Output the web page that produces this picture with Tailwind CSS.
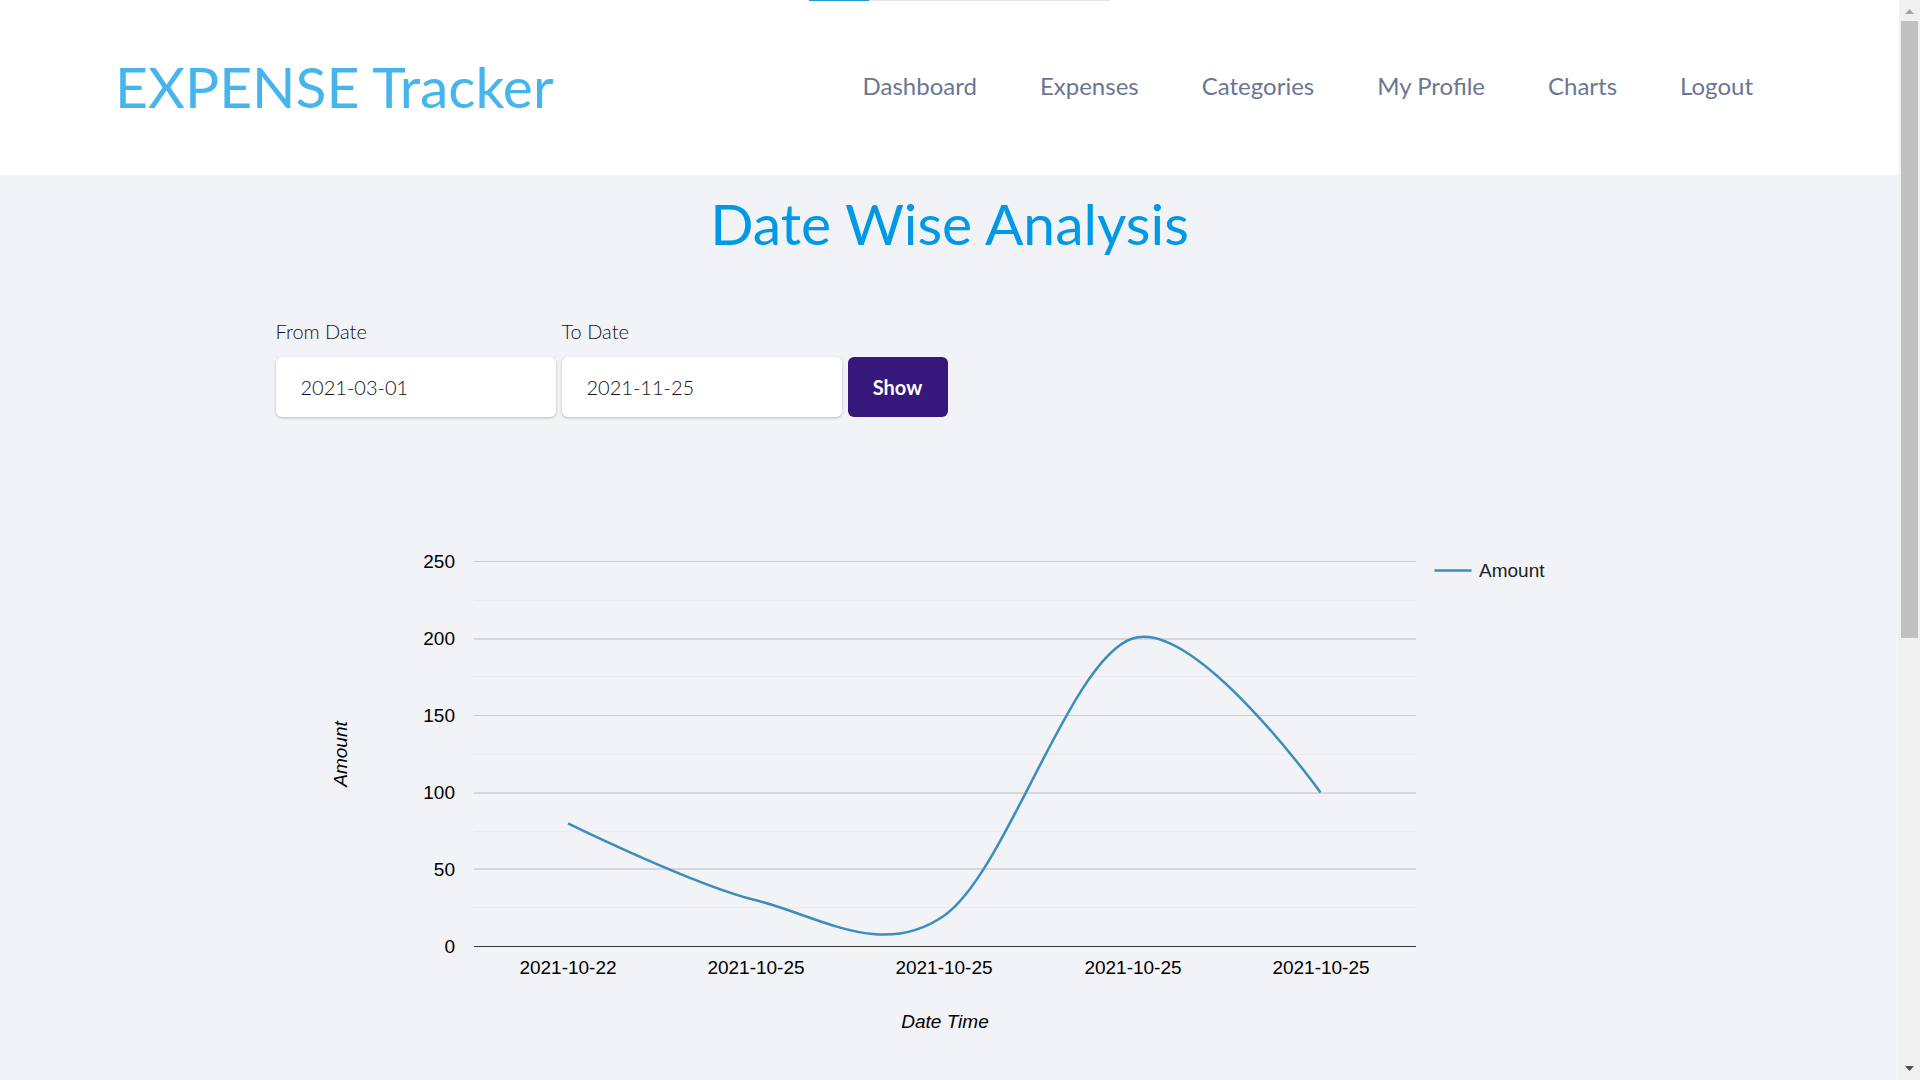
<!DOCTYPE html>
<html lang="en">
<head>
<meta charset="utf-8">
<meta name="viewport" content="width=device-width, initial-scale=1">
<title>EXPENSE Tracker</title>
<script src="https://cdn.jsdelivr.net/npm/@tailwindcss/browser@4"></script>
</head>
<body class="flex h-screen overflow-hidden bg-[#f1f3f7] font-['Lato',sans-serif] text-[#111111]">
  <div class="relative h-full min-w-0 flex-1 overflow-hidden">
    <!-- page loading bar -->
    <div class="absolute top-0 left-[809px] flex h-px w-[301px] bg-[#e5e5e5]"><div class="w-[60px] bg-[#2196d3]"></div></div>

    <header class="flex h-[175px] items-center justify-between bg-white pr-[146px] pb-1 pl-[115px]">
      <a href="#" class="text-[57px] leading-[60px] text-[#47b5ed]">EXPENSE Tracker</a>
      <nav class="flex gap-[63px] text-2xl text-[#6b7694]">
        <a href="#">Dashboard</a>
        <a href="#">Expenses</a>
        <a href="#">Categories</a>
        <a href="#">My Profile</a>
        <a href="#">Charts</a>
        <a href="#">Logout</a>
      </nav>
    </header>

    <main class="mx-auto max-w-[1348px]">
      <h1 class="pt-[18px] text-center text-[57px] leading-[60px] text-[#0099e6]">Date Wise Analysis</h1>

      <form class="flex items-end gap-[6px] pt-[66px]">
        <div class="flex w-[280px] flex-col gap-[14px]">
          <label for="from" class="text-xl leading-6 font-light">From Date</label>
          <input id="from" type="text" value="2021-03-01" class="h-[60px] rounded-md bg-white px-[25px] text-xl font-light shadow-[0_1px_3px_rgba(0,0,0,0.25)]">
        </div>
        <div class="flex w-[280px] flex-col gap-[14px]">
          <label for="to" class="text-xl leading-6 font-light">To Date</label>
          <input id="to" type="text" value="2021-11-25" class="h-[60px] rounded-md bg-white px-[25px] text-xl font-light shadow-[0_1px_3px_rgba(0,0,0,0.25)]">
        </div>
        <button type="submit" class="h-[60px] w-[100px] rounded-md bg-[#36177b] text-xl font-bold text-white">Show</button>
      </form>

      <svg viewBox="0 0 1348 560" class="mt-[83px] block w-full font-['Liberation_Sans',Arial,sans-serif] text-[19px]" role="img" aria-label="Amount by date">
        <g fill="#ebebed">
          <rect x="198" y="100" width="942" height="1"/>
          <rect x="198" y="176" width="942" height="1"/>
          <rect x="198" y="254" width="942" height="1"/>
          <rect x="198" y="331" width="942" height="1"/>
          <rect x="198" y="407" width="942" height="1"/>
        </g>
        <g fill="#cccccc">
          <rect x="198" y="61" width="942" height="1"/>
          <rect x="198" y="215" width="942" height="1"/>
        </g>
        <g fill="#d7d7d9">
          <rect x="198" y="138" width="942" height="2"/>
          <rect x="198" y="292" width="942" height="2"/>
          <rect x="198" y="368" width="942" height="2"/>
        </g>
        <rect x="198" y="446" width="942" height="1" fill="#333333"/>
        <g fill="none" stroke="#3c8dbc" stroke-width="2.5">
          <path d="M292 323.3C292 323.3 417.3 384.9 480 400.3S605.2 459.4 668 415.7S793.8 159 856.5 138.5S1044.5 292.5 1044.5 292.5"/>
          <path d="M1158.500 70.500H1195.500"/>
        </g>
        <text x="1203" y="77" fill="#222222">Amount</text>
        <g text-anchor="end" fill="#000000">
          <text x="179" y="68">250</text>
          <text x="179" y="145">200</text>
          <text x="179" y="222">150</text>
          <text x="179" y="299">100</text>
          <text x="179" y="376">50</text>
          <text x="179" y="453">0</text>
        </g>
        <g text-anchor="middle" fill="#000000">
          <text x="292" y="474">2021-10-22</text>
          <text x="480" y="474">2021-10-25</text>
          <text x="668" y="474">2021-10-25</text>
          <text x="857" y="474">2021-10-25</text>
          <text x="1045" y="474">2021-10-25</text>
          <text x="669" y="528" font-style="italic">Date Time</text>
          <text transform="translate(71 254) rotate(-90)" font-style="italic">Amount</text>
        </g>
      </svg>
    </main>
  </div>

  <!-- vertical scroll bar -->
  <div class="flex h-full w-[21px] shrink-0 flex-col items-center bg-[#f0f0f0]">
    <svg viewBox="0 0 21 21" class="h-[21px] w-[21px] shrink-0"><path d="M6 14L10.500 9L15 14Z" fill="#a3a3a3"/></svg>
    <div class="min-h-0 flex-1"><div class="h-[59.4%] w-[17px] bg-[#c0c0c0]"></div></div>
    <svg viewBox="0 0 21 21" class="h-[21px] w-[21px] shrink-0"><path d="M6 7L10.500 12L15 7Z" fill="#505050"/></svg>
  </div>
</body>
</html>
